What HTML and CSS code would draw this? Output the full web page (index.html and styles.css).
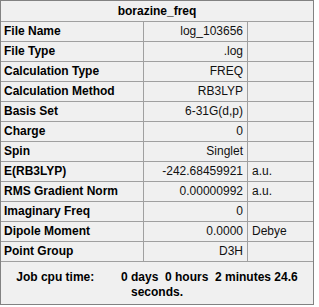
FILE: index.html
```html
<!DOCTYPE html>
<html>
<head>
<meta charset="utf-8">
<link rel="stylesheet" href="styles.css">
</head>
<body>
<div class="panel">
  <div class="title">borazine_freq</div>
  <div class="grid">
    <div class="lbl">File Name</div><div class="val">log_103656</div><div class="unit"></div>
    <div class="lbl">File Type</div><div class="val">.log</div><div class="unit"></div>
    <div class="lbl">Calculation Type</div><div class="val">FREQ</div><div class="unit"></div>
    <div class="lbl">Calculation Method</div><div class="val">RB3LYP</div><div class="unit"></div>
    <div class="lbl">Basis Set</div><div class="val">6-31G(d,p)</div><div class="unit"></div>
    <div class="lbl">Charge</div><div class="val">0</div><div class="unit"></div>
    <div class="lbl">Spin</div><div class="val">Singlet</div><div class="unit"></div>
    <div class="lbl">E(RB3LYP)</div><div class="val">-242.68459921</div><div class="unit">a.u.</div>
    <div class="lbl">RMS Gradient Norm</div><div class="val">0.00000992</div><div class="unit">a.u.</div>
    <div class="lbl">Imaginary Freq</div><div class="val">0</div><div class="unit"></div>
    <div class="lbl">Dipole Moment</div><div class="val">0.0000</div><div class="unit">Debye</div>
    <div class="lbl">Point Group</div><div class="val">D3H</div><div class="unit"></div>
  </div>
  <div class="footer">Job cpu time:&nbsp;&nbsp;&nbsp;&nbsp;&nbsp;&nbsp;&nbsp; 0 days&nbsp; 0 hours&nbsp; 2 minutes 24.6 seconds.</div>
</div>
</body>
</html>
```
FILE: styles.css
```css
html, body {
  margin: 0;
  padding: 0;
  background: #ffffff;
}
body {
  font-family: "Liberation Sans", Arial, sans-serif;
  font-size: 12px;
  color: #000;
}
.panel {
  width: 312px;
  height: 303px;
  border: 1px solid #828282;
  background: #f0f0f0;
  display: flex;
  flex-direction: column;
}
.title {
  height: 20px;
  line-height: 20px;
  border-bottom: 1px solid #a0a0a0;
  text-align: center;
  font-weight: bold;
}
.grid {
  display: grid;
  grid-template-columns: 143px 104px 65px;
  grid-auto-rows: 20px;
}
.grid > div {
  border-bottom: 1px solid #a0a0a0;
  line-height: 19px;
  white-space: nowrap;
  overflow: hidden;
}
.lbl {
  font-weight: bold;
  padding-left: 3px;
  border-right: 1px solid #a0a0a0;
}
.val {
  text-align: right;
  padding-right: 4px;
  border-right: 1px solid #a0a0a0;
  color: #111;
}
.unit {
  padding-left: 4px;
  color: #111;
}
.footer {
  flex: 1;
  padding: 8px 1px 0;
  text-align: center;
  font-weight: bold;
  line-height: 15px;
}
```
